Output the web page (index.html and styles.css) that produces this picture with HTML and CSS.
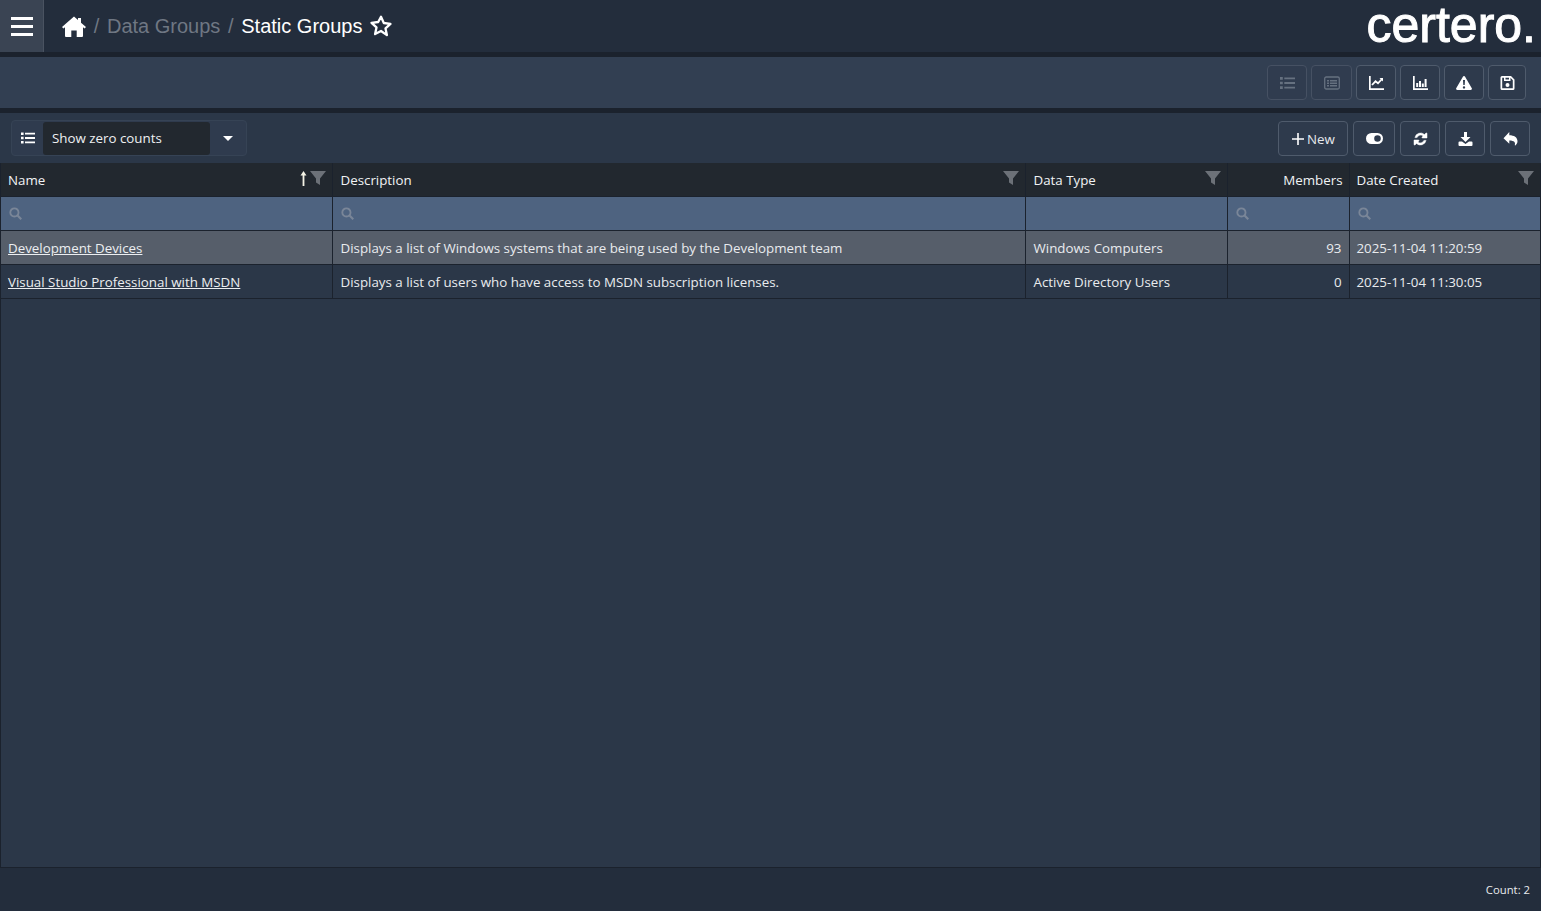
FILE: index.html
```html
<!DOCTYPE html>
<html lang="en">
<head>
<meta charset="utf-8">
<title>Static Groups</title>
<link rel="stylesheet" href="styles.css">
</head>
<body>
<svg class="defs" width="0" height="0" aria-hidden="true">
  <defs>
    <symbol id="i-funnel" viewBox="0 0 16 16"><path d="M0 1h16L10 8.5V15l-4-2.5V8.5z"/></symbol>
    <symbol id="i-search" viewBox="0 0 12 12"><circle cx="5" cy="5" r="3.8" fill="none" stroke="currentColor" stroke-width="1.7"/><path d="M7.700 7.700 11.300 11.300" stroke="currentColor" stroke-width="2" fill="none"/></symbol>
    <symbol id="i-list" viewBox="0 0 14 12"><path d="M0 0.5h2.6v2.4H0zM0 4.8h2.6v2.4H0zM0 9.1h2.6v2.4H0zM4 .8h10v1.8H4zM4 5.1h10v1.8H4zM4 9.4h10v1.8H4z"/></symbol>
  </defs>
</svg>
<div class="app">
  <header class="topbar">
    <button class="menu-btn" aria-label="Menu">
      <span class="bar"></span><span class="bar"></span><span class="bar"></span>
    </button>
    <nav class="crumbs">
      <svg class="home" viewBox="0 0 24 21"><path d="M12 .6 16 4.100V2h3v4.700L24 11l-1.400 1.600-1.600-1.300V20a1 1 0 0 1-1 1h-5.300v-6.500H9.300V21H4a1 1 0 0 1-1-1v-8.700l-1.600 1.300L0 11z" fill="#fff"/></svg>
      <span class="sep">/</span>
      <span class="crumb-muted">Data Groups</span>
      <span class="sep">/</span>
      <span class="crumb-current">Static Groups</span>
      <svg class="star" viewBox="0 0 24 24"><path d="M12 2.800l2.800 6.200 6.700.8-5 4.600 1.400 6.700L12 17l-5.900 3.100 1.400-6.700-5-4.600 6.700-.8z" fill="none" stroke="#fff" stroke-width="2.300" stroke-linejoin="round"/></svg>
    </nav>
    <div class="logo">certero.</div>
  </header>

  <section class="toolbar">
    <button class="tool tool-off w40"><svg class="ico" viewBox="0 0 14 12"><use href="#i-list"/></svg></button>
    <button class="tool tool-off w41"><svg class="ico ico-wide" viewBox="0 0 16 14"><rect x=".7" y="1" width="14.600" height="12" rx="1.500" fill="none" stroke="currentColor" stroke-width="1.300"/><path d="M3 4h2v1.400H3zM6 4h7v1.400H6zM3 6.500h2v1.400H3zM6 6.500h7v1.400H6zM3 9h2v1.400H3zM6 9h7v1.400H6z"/></svg></button>
    <button class="tool w40"><svg class="ico" viewBox="0 0 15 14"><path d="M0 0h1.700v12.200H15V14H0z"/><path d="M3 9l3.500-3.700 2.500 2L13 3" fill="none" stroke="currentColor" stroke-width="1.800"/><path d="M10.500 2H14v3.500z"/></svg></button>
    <button class="tool w40"><svg class="ico" viewBox="0 0 15 14"><path d="M0 0h1.700v12.200H15V14H0z"/><path d="M3.200 7h2v4h-2zM6 5h2v6H6zM8.800 7.500h2V11h-2zM11.600 3h2v8h-2z"/></svg></button>
    <button class="tool w40"><svg class="ico ico-wide" viewBox="0 0 16 14"><path fill-rule="evenodd" d="M8 0c.5 0 .9.300 1.100.7l6.700 11.500c.4.800-.1 1.800-1.100 1.800H1.300C.3 14-.2 13 .2 12.200L6.900.7C7.100.3 7.500 0 8 0zM7 4l.3 5h1.400L9 4zm1 6.200a1.200 1.200 0 1 0 0 2.400 1.200 1.200 0 0 0 0-2.400z"/></svg></button>
    <button class="tool w38"><svg class="ico" viewBox="0 0 14 14"><path fill-rule="evenodd" d="M1.500 0h9L14 3.500v9a1.500 1.500 0 0 1-1.500 1.500h-11A1.500 1.500 0 0 1 0 12.500v-11A1.500 1.500 0 0 1 1.500 0zm.2 1.700v10.600h10.600V4.200L10 1.800V5H3.500V1.700zM5 1.700V3.500h3.500V1.700zM7 7a2 2 0 1 1 0 4 2 2 0 0 1 0-4z"/></svg></button>
  </section>

  <section class="panel">
    <div class="zero-filter">
      <span class="zero-icon"><svg class="ico" viewBox="0 0 14 12"><use href="#i-list"/></svg></span>
      <span class="zero-label">Show zero counts</span>
      <span class="zero-caret"></span>
    </div>
    <div class="actions">
      <button class="tool new-btn"><svg class="plus" viewBox="0 0 12 12"><path d="M5.200 0h1.600v5.200H12v1.600H6.800V12H5.200V6.800H0V5.200h5.200z"/></svg>New</button>
      <button class="tool w42"><svg class="ico ico-toggle" viewBox="0 0 17 11"><path fill-rule="evenodd" d="M5.500 0h6a5.500 5.500 0 0 1 0 11h-6a5.500 5.500 0 0 1 0-11zm6 2.200a3.300 3.300 0 1 0 0 6.600 3.300 3.300 0 0 0 0-6.600z"/></svg></button>
      <button class="tool w40"><svg class="ico ico-refresh" viewBox="0 0 14 14"><path d="M1.400 5.600A5.800 5.800 0 0 1 11 2.500L12.500 1.100a.6.600 0 0 1 1 .4V6H9a.6.600 0 0 1-.4-1l1-1a3.700 3.700 0 0 0-6 1.600zM12.600 8.400A5.800 5.800 0 0 1 3 11.500L1.500 12.900a.6.600 0 0 1-1-.4V8H5a.6.600 0 0 1 .4 1l-1 1a3.700 3.700 0 0 0 6-1.600z"/></svg></button>
      <button class="tool w40"><svg class="ico" viewBox="0 0 14 14"><path d="M5.500 0h3v5H12L7 10 2 5h3.500zM0 10.500a1 1 0 0 1 1-1h2.500L7 12l3.500-2.500H13a1 1 0 0 1 1 1V13a1 1 0 0 1-1 1H1a1 1 0 0 1-1-1z"/></svg></button>
      <button class="tool w40"><svg class="ico" viewBox="0 0 14 14"><path d="M5.800 0v3.200C10.500 3.200 14 5.200 14 9.300c0 2-1.200 3.400-2.200 4.200-.3.200-.6-.1-.5-.4.800-2.700-.4-4.500-5.500-4.600v3.300L0 6.300z"/></svg></button>
    </div>
  </section>

  <main class="grid-wrap">
    <table class="grid">
      <colgroup>
        <col class="c-name"><col class="c-desc"><col class="c-type"><col class="c-members"><col class="c-date">
      </colgroup>
      <thead>
        <tr class="head">
          <th><span class="th-in">Name<span class="th-icons"><svg class="sort" viewBox="0 0 7 15"><path d="M3.500 0 6.500 4.500H4.400V15H2.600V4.500H.5z"/></svg><svg class="funnel"><use href="#i-funnel"/></svg></span></span></th>
          <th class="col-pad"><span class="th-in">Description<span class="th-icons"><svg class="funnel"><use href="#i-funnel"/></svg></span></span></th>
          <th class="col-pad"><span class="th-in">Data Type<span class="th-icons"><svg class="funnel"><use href="#i-funnel"/></svg></span></span></th>
          <th class="num th-members">Members</th>
          <th><span class="th-in">Date Created<span class="th-icons"><svg class="funnel"><use href="#i-funnel"/></svg></span></span></th>
        </tr>
        <tr class="filter">
          <td><svg class="search"><use href="#i-search"/></svg></td>
          <td><svg class="search"><use href="#i-search"/></svg></td>
          <td></td>
          <td><svg class="search"><use href="#i-search"/></svg></td>
          <td><svg class="search"><use href="#i-search"/></svg></td>
        </tr>
      </thead>
      <tbody>
        <tr class="row-hover">
          <td><a href="#">Development Devices</a></td>
          <td class="col-pad">Displays a list of Windows systems that are being used by the Development team</td>
          <td class="col-pad">Windows Computers</td>
          <td class="num">93</td>
          <td>2025-11-04 11:20:59</td>
        </tr>
        <tr>
          <td><a href="#">Visual Studio Professional with MSDN</a></td>
          <td class="col-pad">Displays a list of users who have access to MSDN subscription licenses.</td>
          <td class="col-pad">Active Directory Users</td>
          <td class="num">0</td>
          <td>2025-11-04 11:30:05</td>
        </tr>
      </tbody>
    </table>
  </main>

  <footer class="footer">Count: 2</footer>
</div>
</body>
</html>
```

FILE: styles.css
```css
* { box-sizing: border-box; }
html, body { margin: 0; height: 100%; }
body {
  background: #2b3748;
  color: #fff;
  font-family: "Open Sans", "Noto Sans", sans-serif;
  font-size: 13.33px;
  overflow: hidden;
}
.defs { position: absolute; }
.app { height: 911px; display: flex; flex-direction: column; }

.topbar {
  height: 57px;
  flex: none;
  display: flex;
  align-items: flex-start;
  background: #232d3c;
  border-bottom: 5px solid #1b222d;
}
.menu-btn {
  width: 44px;
  height: 52px;
  background: #3a4453;
  border: 0;
  border-right: 1px solid #4a5361;
  padding: 0 0 0 1px;
  display: flex;
  flex-direction: column;
  align-items: center;
  justify-content: center;
  gap: 5px;
}
.bar { width: 22px; height: 3px; background: #fff; }
.crumbs {
  display: flex;
  align-items: center;
  height: 52px;
  margin-left: 18px;
  font-family: "Liberation Sans", Arial, sans-serif;
  font-size: 20px;
}
.home { width: 24px; height: 21px; }
.sep { color: #6f7783; margin: 0 7.700px; }
.crumb-muted { color: #6f7783; }
.crumb-current { color: #fff; }
.star { width: 24px; height: 24px; margin-left: 7px; }
.logo {
  margin-left: auto;
  margin-right: 5px;
  font-family: "Liberation Sans", Arial, sans-serif;
  font-size: 50px;
  line-height: 50px;
  -webkit-text-stroke: 1px #fff;
}

.toolbar {
  height: 56px;
  flex: none;
  display: flex;
  justify-content: flex-end;
  align-items: flex-start;
  gap: 4px;
  padding: 8px 15px 0 0;
  background: #323f52;
  border-bottom: 5px solid #1b222d;
}
.tool {
  height: 35px;
  display: inline-flex;
  align-items: center;
  justify-content: center;
  padding: 0;
  color: #fff;
  background: #2e3a4c;
  border: 1px solid #4f5b6c;
  border-radius: 4px;
  fill: currentColor;
}
.tool-off { color: #667180; border-color: #465163; background: #303c4f; }
.w38 { width: 38px; }
.w40 { width: 40px; }
.w41 { width: 41px; }
.w42 { width: 42px; }
.ico { width: 15px; height: 14px; fill: currentColor; }
.ico-wide { width: 16px; }
.ico-toggle { width: 17px; height: 11px; }
.ico-refresh { stroke: currentColor; stroke-width: .5px; }

.panel {
  height: 50px;
  flex: none;
  display: flex;
  justify-content: space-between;
  align-items: flex-start;
  padding: 7px 11px 0 11px;
  background: #2b3748;
}
.zero-filter {
  width: 236px;
  height: 36px;
  display: flex;
  align-items: center;
  background: #2f3b4e;
  border: 1px solid #364355;
  border-radius: 4px;
}
.zero-icon { width: 31px; display: flex; justify-content: center; color: #fff; }
.zero-icon .ico { width: 14px; height: 12px; }
.zero-label {
  width: 167px;
  height: 33px;
  display: flex;
  align-items: center;
  padding-left: 9px;
  background: #22282f;
  border-radius: 3px;
  color: #eef0f2;
  font-size: 13.33px;
}
.zero-caret {
  margin-left: 13px;
  width: 0;
  height: 0;
  border-left: 5px solid transparent;
  border-right: 5px solid transparent;
  border-top: 5px solid #fff;
}
.actions { display: flex; gap: 5px; margin-top: 1px; }
.new-btn {
  width: 70px;
  gap: 3px;
  font: inherit;
  font-size: 13.33px;
  color: #e6e9ed;
}
.plus { width: 12px; height: 12px; fill: #fff; margin-left: 1px; }

.grid-wrap {
  flex: 1;
  min-height: 0;
  border-left: 1px solid #1b222d;
  border-right: 1px solid #1b222d;
}
.grid {
  width: 1539px;
  table-layout: fixed;
  border-collapse: collapse;
  font-size: 13.33px;
}
.c-name { width: 331px; }
.c-desc { width: 693px; }
.c-type { width: 202px; }
.c-members { width: 122px; }
.c-date { width: 191px; }
.grid th, .grid td {
  height: 34px;
  padding: 1px 7px 0;
  border: 1px solid #1b222d;
  border-top: 0;
  text-align: left;
  font-weight: 400;
  white-space: nowrap;
  vertical-align: middle;
  color: #e9ebee;
}
.grid .head th { height: 33px; }
.grid .col-pad { padding-left: 8px; }
.grid tr > *:first-child { border-left: 0; }
.grid tr > *:last-child { border-right: 0; }
.grid .num { text-align: right; }
.grid .th-members { padding-right: 6px; }
.head th { background: #22282f; color: #f1f3f5; }
.th-in { display: flex; justify-content: space-between; align-items: center; }
.th-icons { display: inline-flex; align-items: center; gap: 3px; margin-top: -3px; margin-right: -1px; }
.funnel { width: 16px; height: 16px; fill: #6c7178; }
.sort { width: 7px; height: 15px; fill: #f4f3e6; }
.grid .filter td { background: #4e6380; padding-left: 8px; }
.search { display: block; width: 13px; height: 13px; color: #7a8698; }
.row-hover td { background: #565e6a; }
.grid a { color: #eceef1; text-decoration: underline; }

.footer {
  height: 44px;
  flex: none;
  display: flex;
  justify-content: flex-end;
  align-items: center;
  padding: 0 11px 0 0;
  background: #232d3c;
  border-top: 1px solid #1b222d;
  font-size: 11.3px;
  color: #e9ebee;
}
```
